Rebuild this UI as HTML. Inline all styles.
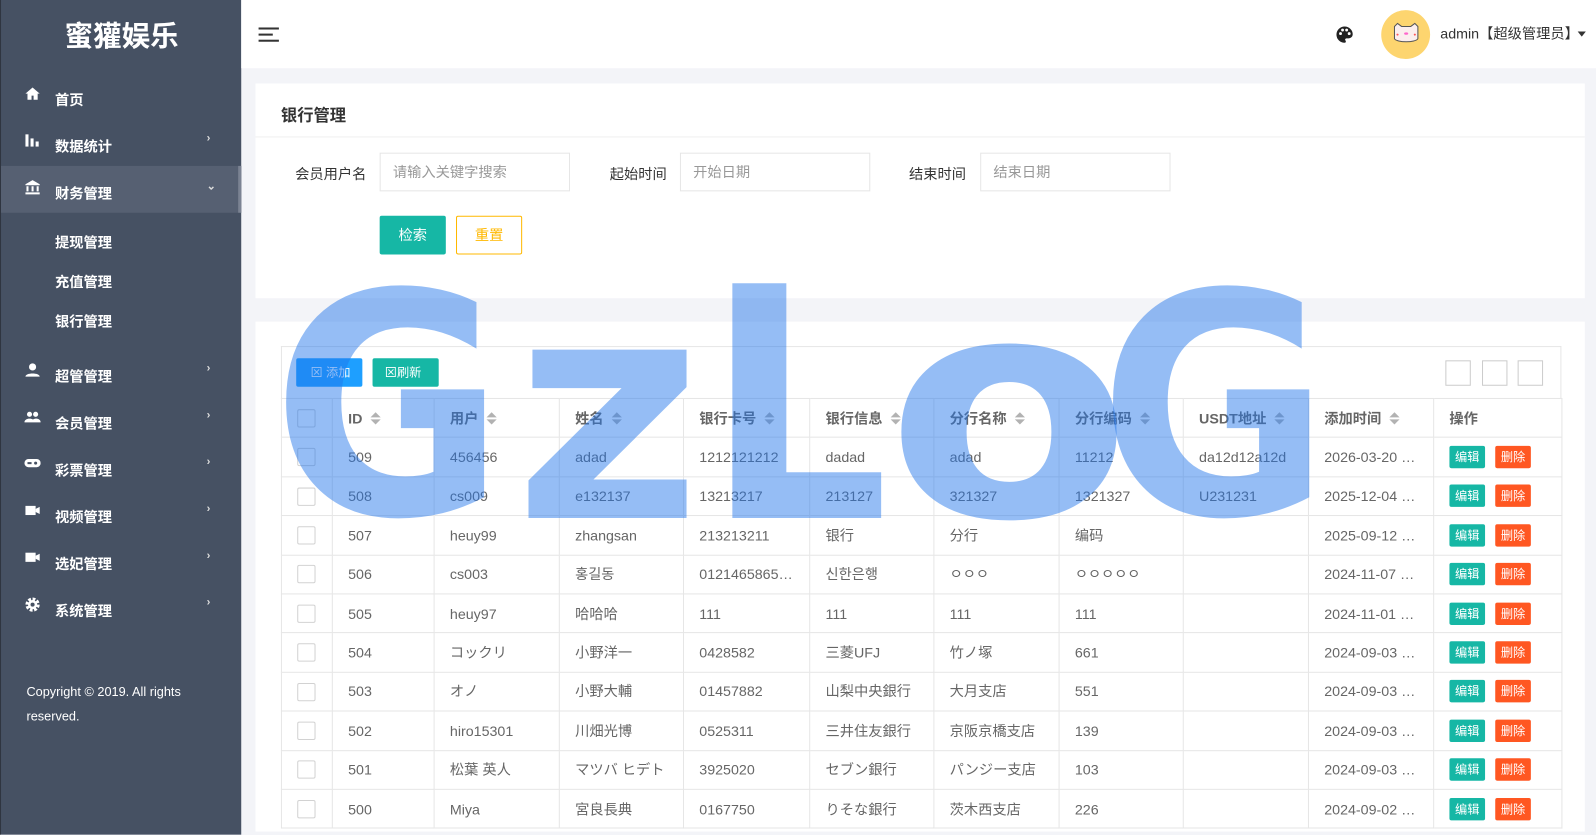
<!DOCTYPE html>
<html><head><meta charset="utf-8">
<style>
*{margin:0;padding:0;box-sizing:border-box}
body{width:1596px;height:817px;overflow:hidden;background:#f3f4f8;font-family:"Liberation Sans","Noto Sans CJK SC",sans-serif;font-size:14px;color:#555;position:relative}
#wrap{position:absolute;left:0;top:0;width:1568px;height:803px;transform:scale(1.01786);transform-origin:0 0}
.side{position:absolute;left:0;top:0;width:237px;height:820px;background:#465163;border-left:1px solid #2f3540}
.logo{position:absolute;left:0;width:237px;top:14px;text-align:center;color:#fff;font-size:28px;font-weight:bold}
.mi{position:absolute;left:0;width:236px;height:46px;color:#fff;font-size:14px;font-weight:bold}
.mi .ic{position:absolute;left:23px;top:13px;width:16px;height:16px}
.mi .t{position:absolute;left:53px;top:17px}
.mi .ar{position:absolute;left:202px;top:13px;font-size:11px;color:#ddd}
.sub{position:absolute;left:53px;color:#fff;font-size:14px;font-weight:bold}
.copy{position:absolute;left:25px;top:668px;color:#fff;font-size:12.5px;line-height:24px}
.hdr{position:absolute;left:237px;top:0;width:1331px;height:67px;background:#fff}
.card{position:absolute;background:#fff}
.inp{position:absolute;height:38px;border:1px solid #e6e6e6;background:#fff;color:#999;padding-left:12px;line-height:36px}
.lbl{position:absolute;color:#333}
table{position:absolute;left:276px;top:391px;border-collapse:collapse;background:#fff}
td,th{border:1px solid #e6e6e6;height:38.4px;padding-left:15px;text-align:left;white-space:nowrap;overflow:hidden;font-size:14px;color:#666;font-weight:normal}
th{font-weight:bold;color:#666}
.cb{display:inline-block;width:18px;height:18px;border:1px solid #d2d2d2;border-radius:2px;vertical-align:middle;background:#fff}
.srt{display:inline-block;margin-left:8px;vertical-align:middle;width:10px;height:14px;position:relative}
.srt:before{content:"";position:absolute;left:0;top:0;border:5px solid transparent;border-bottom:5px solid #b2b2b2;border-top:0}
.srt:after{content:"";position:absolute;left:0;top:7px;border:5px solid transparent;border-top:5px solid #b2b2b2;border-bottom:0}
.be{display:inline-block;width:35px;height:22px;line-height:22px;text-align:center;color:#fff;font-size:12px;background:#16b7a5;border-radius:2px}
.bd{display:inline-block;width:35px;height:22px;line-height:22px;text-align:center;color:#fff;font-size:12px;background:#ff5722;border-radius:2px;margin-left:10px}
.wm{position:absolute;left:0;top:0;pointer-events:none}
.xb{position:absolute;top:354px;width:25px;height:25px;border:1px solid #ccc;background:#fff}
</style></head><body>
<div id="wrap">
<div class="side">
<div class="logo">蜜獾娱乐</div>
<div class="mi" style="top:71px"><svg class="ic" viewBox="0 0 16 16"><path d="M8 2 1 8h2v6h4v-4h2v4h4V8h2z" fill="#fff"/></svg><span class="t">首页</span></div>
<div class="mi" style="top:117px"><svg class="ic" viewBox="0 0 16 16"><rect x="1" y="2" width="3" height="12" fill="#fff"/><rect x="6" y="6" width="3" height="8" fill="#fff"/><rect x="11" y="9" width="3" height="5" fill="#fff"/></svg><span class="t">数据统计</span><span class="ar">›</span></div>
<div class="mi" style="top:163px;background:#566072;border-right:3px solid #7b8393"><svg class="ic" viewBox="0 0 16 16"><path d="M8 1 1 5v1h14V5z M2 7h2v5H2zM7 7h2v5H7zM12 7h2v5h-2zM1 13h14v2H1z" fill="#fff"/></svg><span class="t">财务管理</span><span class="ar">⌄</span></div>
<div class="sub" style="top:228px">提现管理</div>
<div class="sub" style="top:267px">充值管理</div>
<div class="sub" style="top:306px">银行管理</div>
<div class="mi" style="top:343px"><svg class="ic" viewBox="0 0 16 16"><circle cx="8" cy="4.5" r="3.5" fill="#fff"/><path d="M1 14c0-4 14-4 14 0z" fill="#fff"/></svg><span class="t">超管管理</span><span class="ar">›</span></div>
<div class="mi" style="top:389px"><svg class="ic" viewBox="0 0 16 16"><circle cx="5" cy="5" r="2.5" fill="#fff"/><circle cx="11" cy="5" r="2.5" fill="#fff"/><path d="M0 13c0-5 10-5 10 0zM7 13c0-5 9-5 9 0z" fill="#fff"/></svg><span class="t">会员管理</span><span class="ar">›</span></div>
<div class="mi" style="top:435px"><svg class="ic" viewBox="0 0 16 16"><rect x="0" y="3" width="16" height="8" rx="4" fill="#fff"/><circle cx="11" cy="7" r="1.5" fill="#465163"/><rect x="3" y="6" width="4" height="2" fill="#465163"/></svg><span class="t">彩票管理</span><span class="ar">›</span></div>
<div class="mi" style="top:481px"><svg class="ic" viewBox="0 0 16 16"><rect x="1" y="3" width="10" height="9" fill="#fff"/><path d="M11 6l4-2v7l-4-2z" fill="#fff"/></svg><span class="t">视频管理</span><span class="ar">›</span></div>
<div class="mi" style="top:527px"><svg class="ic" viewBox="0 0 16 16"><rect x="1" y="3" width="10" height="9" fill="#fff"/><path d="M11 6l4-2v7l-4-2z" fill="#fff"/></svg><span class="t">选妃管理</span><span class="ar">›</span></div>
<div class="mi" style="top:573px"><svg class="ic" viewBox="0 0 16 16"><circle cx="8" cy="8" r="5" fill="none" stroke="#fff" stroke-width="4" stroke-dasharray="2.5 1.4"/><circle cx="8" cy="8" r="4.5" fill="#fff"/><circle cx="8" cy="8" r="2" fill="#465163"/></svg><span class="t">系统管理</span><span class="ar">›</span></div>
<div class="copy">Copyright © 2019. All rights<br>reserved.</div>
</div>
<div class="hdr">
<svg style="position:absolute;left:17px;top:26px" width="21" height="16"><rect y="1" width="20" height="2" fill="#333"/><rect y="7" width="14" height="2" fill="#333"/><rect y="13" width="20" height="2" fill="#333"/></svg>
<svg style="position:absolute;left:1075px;top:25px" width="18" height="18" viewBox="0 0 18 18"><path d="M9 1a8 8 0 0 0 0 16c1.5 0 1.5-1.5.8-2.3-.7-.9 0-2 1.2-2H13a4 4 0 0 0 4-4C17 4.5 13.5 1 9 1z" fill="#222"/><circle cx="5" cy="8" r="1.4" fill="#fff"/><circle cx="7" cy="4.5" r="1.4" fill="#fff"/><circle cx="11" cy="4.5" r="1.4" fill="#fff"/><circle cx="13.5" cy="8" r="1.4" fill="#fff"/></svg>
<div style="position:absolute;left:1120px;top:10px;width:48px;height:48px;border-radius:50%;background:#fdd56f"></div>
<svg style="position:absolute;left:1130px;top:22px" width="29" height="22" viewBox="0 0 29 22"><path d="M3 4 6 1l4 3h9l4-3 3 3v12c-2 4-21 4-23 0z" fill="#fbeeee" stroke="#555" stroke-width="1"/><circle cx="6" cy="12" r="1" fill="#f55"/><circle cx="23" cy="12" r="1" fill="#f55"/><ellipse cx="14.5" cy="11" rx="2" ry="1.2" fill="#f6c"/></svg>
<div style="position:absolute;left:1178px;top:23px;color:#333;font-size:14px">admin【超级管理员】</div>
<div style="position:absolute;left:1313px;top:31px;border:4px solid transparent;border-top:5px solid #333"></div>
</div>
<div class="card" style="left:251px;top:82px;width:1306px;height:211px">
<div style="height:53px;border-bottom:1px solid #f0f0f0;padding:18px 0 0 25px;font-size:16px;font-weight:bold;color:#333">银行管理</div>
</div>
<div class="lbl" style="left:290px;top:161px">会员用户名</div>
<div class="inp" style="left:373px;top:150px;width:187px">请输入关键字搜索</div>
<div class="lbl" style="left:599px;top:161px">起始时间</div>
<div class="inp" style="left:668px;top:150px;width:187px">开始日期</div>
<div class="lbl" style="left:893px;top:161px">结束时间</div>
<div class="inp" style="left:963px;top:150px;width:187px">结束日期</div>
<div style="position:absolute;left:373px;top:212px;width:65px;height:38px;background:#16b7a5;color:#fff;text-align:center;line-height:38px;border-radius:2px">检索</div>
<div style="position:absolute;left:448px;top:212px;width:65px;height:38px;border:1px solid #ffb800;color:#ffb800;text-align:center;line-height:36px;border-radius:2px;background:#fff">重置</div>
<div class="card" style="left:251px;top:316px;width:1306px;height:501px"></div>
<div style="position:absolute;left:276px;top:340px;width:1258px;height:52px;border:1px solid #e6e6e6;border-bottom:0;background:#fff"></div>
<div style="position:absolute;left:291px;top:352px;width:65px;height:28px;background:#1e9fff;color:#fff;font-size:12px;line-height:28px;padding-left:14px;border-radius:2px">⊠ 添加</div>
<div style="position:absolute;left:366px;top:352px;width:65px;height:28px;background:#16b7a5;color:#fff;font-size:12px;line-height:28px;padding-left:12px;border-radius:2px">⊠刷新</div>
<div class="xb" style="left:1420px"></div><div class="xb" style="left:1456px"></div><div class="xb" style="left:1491px"></div>
<table>
<colgroup><col style="width:50px"><col style="width:100px"><col style="width:123px"><col style="width:122px"><col style="width:124px"><col style="width:122px"><col style="width:123px"><col style="width:122px"><col style="width:123px"><col style="width:123px"><col style="width:126px"></colgroup>
<tr><th><span class="cb"></span></th><th>ID<span class="srt"></span></th><th>用户<span class="srt"></span></th><th>姓名<span class="srt"></span></th><th>银行卡号<span class="srt"></span></th><th>银行信息<span class="srt"></span></th><th>分行名称<span class="srt"></span></th><th>分行编码<span class="srt"></span></th><th>USDT地址<span class="srt"></span></th><th>添加时间<span class="srt"></span></th><th>操作</th></tr>
<tr><td><span class="cb"></span></td><td>509</td><td>456456</td><td>adad</td><td>1212121212</td><td>dadad</td><td>adad</td><td>11212</td><td>da12d12a12d</td><td>2026-03-20 …</td><td><span class="be">编辑</span><span class="bd">删除</span></td></tr>
<tr><td><span class="cb"></span></td><td>508</td><td>cs009</td><td>e132137</td><td>13213217</td><td>213127</td><td>321327</td><td>1321327</td><td>U231231</td><td>2025-12-04 …</td><td><span class="be">编辑</span><span class="bd">删除</span></td></tr>
<tr><td><span class="cb"></span></td><td>507</td><td>heuy99</td><td>zhangsan</td><td>213213211</td><td>银行</td><td>分行</td><td>编码</td><td></td><td>2025-09-12 …</td><td><span class="be">编辑</span><span class="bd">删除</span></td></tr>
<tr><td><span class="cb"></span></td><td>506</td><td>cs003</td><td>홍길동</td><td>0121465865…</td><td>신한은행</td><td>ㅇㅇㅇ</td><td>ㅇㅇㅇㅇㅇ</td><td></td><td>2024-11-07 …</td><td><span class="be">编辑</span><span class="bd">删除</span></td></tr>
<tr><td><span class="cb"></span></td><td>505</td><td>heuy97</td><td>哈哈哈</td><td>111</td><td>111</td><td>111</td><td>111</td><td></td><td>2024-11-01 …</td><td><span class="be">编辑</span><span class="bd">删除</span></td></tr>
<tr><td><span class="cb"></span></td><td>504</td><td>コックリ</td><td>小野洋一</td><td>0428582</td><td>三菱UFJ</td><td>竹ノ塚</td><td>661</td><td></td><td>2024-09-03 …</td><td><span class="be">编辑</span><span class="bd">删除</span></td></tr>
<tr><td><span class="cb"></span></td><td>503</td><td>オノ</td><td>小野大輔</td><td>01457882</td><td>山梨中央銀行</td><td>大月支店</td><td>551</td><td></td><td>2024-09-03 …</td><td><span class="be">编辑</span><span class="bd">删除</span></td></tr>
<tr><td><span class="cb"></span></td><td>502</td><td>hiro15301</td><td>川畑光博</td><td>0525311</td><td>三井住友銀行</td><td>京阪京橋支店</td><td>139</td><td></td><td>2024-09-03 …</td><td><span class="be">编辑</span><span class="bd">删除</span></td></tr>
<tr><td><span class="cb"></span></td><td>501</td><td>松葉 英人</td><td>マツバ ヒデト</td><td>3925020</td><td>セブン銀行</td><td>パンジー支店</td><td>103</td><td></td><td>2024-09-03 …</td><td><span class="be">编辑</span><span class="bd">删除</span></td></tr>
<tr><td><span class="cb"></span></td><td>500</td><td>Miya</td><td>宮良長典</td><td>0167750</td><td>りそな銀行</td><td>茨木西支店</td><td>226</td><td></td><td>2024-09-02 …</td><td><span class="be">编辑</span><span class="bd">删除</span></td></tr>
</table>
</div>
<svg class="wm" width="1596" height="817" style="font-family:'DejaVu Sans',sans-serif;font-weight:bold;font-size:308px" fill="rgba(33,118,235,0.48)">
<text x="272" y="514" textLength="233" lengthAdjust="spacingAndGlyphs">G</text>
<text x="514" y="518" textLength="188" lengthAdjust="spacingAndGlyphs">z</text>
<text x="706" y="518" textLength="183" lengthAdjust="spacingAndGlyphs" style="font-size:322px">L</text>
<text x="886" y="516" textLength="246" lengthAdjust="spacingAndGlyphs">o</text>
<text x="1099" y="514" textLength="231" lengthAdjust="spacingAndGlyphs">G</text>
</svg>
</body></html>
